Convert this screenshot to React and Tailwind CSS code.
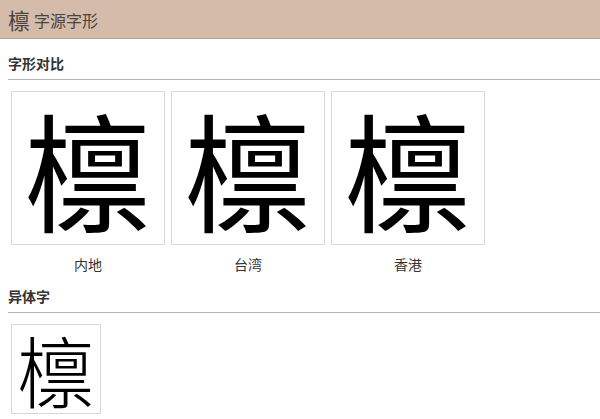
import React from 'react';

const cjk = { fontFamily: '"Noto Sans CJK SC", "Noto Sans CJK TC", sans-serif' };

const regions = ['内地', '台湾', '香港'];

function Section({ title, children }) {
  return (
    <div className="pl-2">
      <h2 className="text-[14px] font-bold leading-[20px] text-[#333] pb-[6px] border-b border-[#b5b5b5]">{title}</h2>
      {children}
    </div>
  );
}

export default function App() {
  return (
    <div className="w-[600px] h-[419px] bg-white overflow-hidden" style={cjk}>
      {/* Header */}
      <div className="h-[39px] bg-[#d5bbaa] border-b border-[#aaa48e] flex items-center px-2 gap-[4px]">
        <span className="text-[22px] leading-none text-[#4a4440]">檩</span>
        <span className="text-[16px] leading-none text-[#4a4440] mt-[2px]">字源字形</span>
      </div>

      <div className="pt-[14px]">
        <Section title="字形对比">
          <div className="flex gap-[6px] pl-[3px] pt-[11px]">
            {regions.map((r) => (
              <div key={r} className="flex flex-col items-center">
                <div className="w-[154px] h-[154px] border border-[#d8d8d8] flex items-center justify-center">
                  <span className="text-[128px] leading-none font-normal text-black">檩</span>
                </div>
                <span className="text-[14px] text-[#333] mt-[10px] leading-[18px]">{r}</span>
              </div>
            ))}
          </div>
        </Section>

        <div className="pt-[13px]">
          <Section title="异体字">
            <div className="pl-[3px] pt-[11px]">
              <div className="w-[90px] h-[90px] border border-[#d8d8d8] flex items-center justify-center">
                <span className="text-[78px] leading-none font-light text-black">檩</span>
              </div>
            </div>
          </Section>
        </div>
      </div>
    </div>
  );
}
